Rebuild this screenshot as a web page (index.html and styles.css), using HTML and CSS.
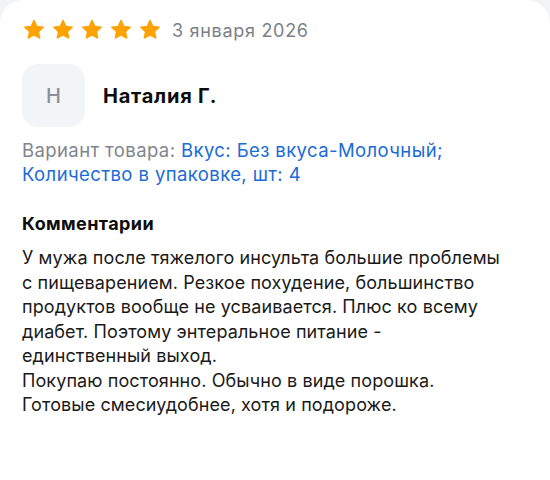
FILE: index.html
```html
<!DOCTYPE html>
<html lang="ru">
<head>
<meta charset="utf-8">
<link rel="stylesheet" href="styles.css">
</head>
<body>
<div class="card">
  <div class="rating">
    <div class="stars">
      <svg class="star" viewBox="0 0 24 24"><path d="M12 2.6l2.7 5.9 6.4.7-4.8 4.4 1.3 6.3L12 16.7l-5.6 3.2 1.3-6.3-4.8-4.4 6.4-.7z"/></svg>
      <svg class="star" viewBox="0 0 24 24"><path d="M12 2.6l2.7 5.9 6.4.7-4.8 4.4 1.3 6.3L12 16.7l-5.6 3.2 1.3-6.3-4.8-4.4 6.4-.7z"/></svg>
      <svg class="star" viewBox="0 0 24 24"><path d="M12 2.6l2.7 5.9 6.4.7-4.8 4.4 1.3 6.3L12 16.7l-5.6 3.2 1.3-6.3-4.8-4.4 6.4-.7z"/></svg>
      <svg class="star" viewBox="0 0 24 24"><path d="M12 2.6l2.7 5.9 6.4.7-4.8 4.4 1.3 6.3L12 16.7l-5.6 3.2 1.3-6.3-4.8-4.4 6.4-.7z"/></svg>
      <svg class="star" viewBox="0 0 24 24"><path d="M12 2.6l2.7 5.9 6.4.7-4.8 4.4 1.3 6.3L12 16.7l-5.6 3.2 1.3-6.3-4.8-4.4 6.4-.7z"/></svg>
    </div>
    <span class="date">3 января 2026</span>
  </div>
  <div class="author">
    <div class="avatar">Н</div>
    <span class="name">Наталия Г.</span>
  </div>
  <p class="variant"><span class="label">Вариант товара: </span><span class="value">Вкус: Без вкуса-Молочный;<br>Количество в упаковке, шт: 4</span></p>
  <h3 class="title">Комментарии</h3>
  <p class="comment">У мужа после тяжелого инсульта большие проблемы с пищеварением. Резкое похудение, большинство продуктов вообще не усваивается. Плюс ко всему диабет. Поэтому энтеральное питание - единственный выход.<br>Покупаю постоянно. Обычно в виде порошка. Готовые смесиудобнее, хотя и подороже.</p>
</div>
</body>
</html>
```
FILE: styles.css
```css
html, body {
  margin: 0;
  padding: 0;
  background: #f2f3f5;
}
body {
  font-family: Inter, Roboto, "Noto Sans", sans-serif;
  color: #111;
}
.card {
  background: #fff;
  border-radius: 24px 24px 0 0;
  min-height: 480px;
  padding: 18px 22px 0 22px;
  box-sizing: border-box;
}
.rating {
  display: flex;
  align-items: center;
  gap: 10px;
  height: 24px;
}
.stars {
  display: flex;
  gap: 5px;
}
.star {
  width: 24px;
  height: 24px;
  fill: #ffa200;
  stroke: #ffa200;
  stroke-width: 1.6;
  stroke-linejoin: round;
}
.date {
  font-size: 18px;
  letter-spacing: 0.7px;
  color: #7b8089;
}
.author {
  display: flex;
  align-items: center;
  gap: 18px;
  margin-top: 22px;
}
.avatar {
  width: 63px;
  height: 63px;
  border-radius: 16px;
  background: #f2f4f8;
  color: #8a8f98;
  font-size: 20px;
  font-weight: 500;
  display: flex;
  align-items: center;
  justify-content: center;
}
.name {
  font-size: 20px;
  letter-spacing: 0.75px;
  font-weight: 700;
  color: #0d0d0d;
}
.variant {
  margin: 11px 0 0;
  font-size: 18.5px;
  letter-spacing: 0.4px;
  line-height: 24px;
}
.label { color: #80858d; }
.value { color: #1a6bd6; }
.title {
  margin: 26px 0 0;
  font-size: 18px;
  letter-spacing: 0.4px;
  line-height: 24px;
  font-weight: 700;
  color: #0d0d0d;
}
.comment {
  margin: 10px 0 0;
  max-width: 484px;
  font-size: 18px;
  letter-spacing: 0.1px;
  line-height: 24.5px;
  color: #1a1a1a;
}
```
